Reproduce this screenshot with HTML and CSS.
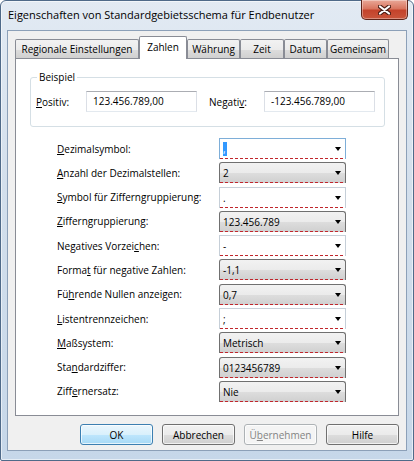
FILE: index.html
```html
<!DOCTYPE html>
<html lang="de">
<head>
  <meta charset="UTF-8" />
  <title>Eigenschaften von Standardgebietsschema für Endbenutzer</title>
  <link rel="stylesheet" href="styles.css">
</head>
<body>
  <div class="window">
    <div class="titlebar">
      <span class="title">Eigenschaften von Standardgebietsschema für Endbenutzer</span>
      <div class="close">
        <svg width="13" height="10" viewBox="0 0 13 10">
          <path d="M2 1.5 L11 8.5 M11 1.5 L2 8.5" stroke="#4a1d14" stroke-width="4.2" stroke-linecap="round" />
          <path d="M2 1.5 L11 8.5 M11 1.5 L2 8.5" stroke="#ffffff" stroke-width="2.2" stroke-linecap="round" />
        </svg>
      </div>
    </div>

    <div class="client">
      <!-- Registerkarten -->
      <div class="tabstrip">
        <div class="tab w-region">Regionale Einstellungen</div>
        <div class="tab active w-zahlen">Zahlen</div>
        <div class="tab w-waehrung">Währung</div>
        <div class="tab w-zeit">Zeit</div>
        <div class="tab w-datum">Datum</div>
        <div class="tab w-gemeinsam">Gemeinsam</div>
      </div>

      <div class="panel">
        <fieldset class="sample">
          <legend>Beispiel</legend>
          <div class="sample-row">
            <span class="sample-label"><u>P</u>ositiv:</span>
            <div class="textbox">123.456.789,00</div>
            <span class="sample-label neg">Negati<u>v</u>:</span>
            <div class="textbox">-123.456.789,00</div>
          </div>
        </fieldset>

        <div class="settings">
          <div class="row">
            <span class="row-label"><u>D</u>ezimalsymbol:</span>
            <div class="combo edit focus"><span class="sel">,</span></div>
          </div>
          <div class="row">
            <span class="row-label"><u>A</u>nzahl der Dezimalstellen:</span>
            <div class="combo list">2</div>
          </div>
          <div class="row">
            <span class="row-label"><u>S</u>ymbol für Zifferngruppierung:</span>
            <div class="combo edit">.</div>
          </div>
          <div class="row">
            <span class="row-label"><u>Z</u>ifferngruppierung:</span>
            <div class="combo list">123.456.789</div>
          </div>
          <div class="row">
            <span class="row-label">Negatives Vorzei<u>c</u>hen:</span>
            <div class="combo edit">-</div>
          </div>
          <div class="row">
            <span class="row-label">Forma<u>t</u> für negative Zahlen:</span>
            <div class="combo list">-1,1</div>
          </div>
          <div class="row">
            <span class="row-label">Fü<u>h</u>rende Nullen anzeigen:</span>
            <div class="combo list">0,7</div>
          </div>
          <div class="row">
            <span class="row-label"><u>L</u>istentrennzeichen:</span>
            <div class="combo edit">;</div>
          </div>
          <div class="row">
            <span class="row-label"><u>M</u>aßsystem:</span>
            <div class="combo list">Metrisch</div>
          </div>
          <div class="row">
            <span class="row-label">Sta<u>n</u>dardziffer:</span>
            <div class="combo list">0123456789</div>
          </div>
          <div class="row">
            <span class="row-label">Ziff<u>e</u>rnersatz:</span>
            <div class="combo list">Nie</div>
          </div>
        </div>
      </div>

      <div class="buttons">
        <button class="btn default">OK</button>
        <button class="btn">Abbrechen</button>
        <button class="btn" disabled>Ü<u>b</u>ernehmen</button>
        <button class="btn">Hilfe</button>
      </div>
    </div>
  </div>
</body>
</html>
```

FILE: styles.css
```css
* {
  box-sizing: border-box;
}
body {
  margin: 0;
  font-family: 'Open Sans', 'Liberation Sans', sans-serif;
  font-size: 10px;
  color: #000;
  background: #fff;
}
.window {
  width: 414px;
  height: 461px;
  display: flex;
  flex-direction: column;
  border: 1px solid #4f6a89;
  border-radius: 6px 6px 2px 2px;
  background: linear-gradient(180deg, #e2eaf3 0%, #d3dfec 40%, #c6d7e9 100%);
  box-shadow: inset 0 0 0 1px rgba(255, 255, 255, 0.55);
}
.titlebar {
  height: 29px;
  display: flex;
  align-items: flex-start;
}
.title {
  font-size: 11px;
  padding-left: 7px;
  margin-top: 6px;
  line-height: 16px;
  white-space: nowrap;
}
.close {
  margin-left: auto;
  margin-right: 5px;
  margin-top: -1px;
  width: 47px;
  height: 20px;
  display: flex;
  align-items: center;
  justify-content: center;
  border: 1px solid #5e2419;
  border-top: none;
  border-radius: 0 0 5px 5px;
  background: linear-gradient(180deg, #e9a898 0%, #d97660 45%, #c4432b 55%, #c9553b 100%);
  box-shadow: inset 0 0 0 1px rgba(255, 255, 255, 0.35);
}
.client {
  flex: 1;
  margin: 0 6px 9px 6px;
  border: 1px solid #8ca0b8;
  background: #f0f0f0;
  display: flex;
  flex-direction: column;
  padding: 5px 0 5px 0;
}

/* Registerkarten */
.tabstrip {
  height: 23px;
  display: flex;
  align-items: flex-end;
  padding-left: 7px;
  margin-bottom: -1px;
}
.tab {
  height: 20px;
  line-height: 18px;
  text-align: center;
  white-space: nowrap;
  border: 1px solid #898c95;
  border-bottom: none;
  border-radius: 2px 2px 0 0;
  background: linear-gradient(180deg, #f2f2f2 0%, #ebebeb 50%, #dddddd 51%, #cfcfcf 100%);
}
.tab.active {
  height: 23px;
  line-height: 20px;
  background: #fff;
  position: relative;
  z-index: 1;
}
.w-region { width: 124px; }
.w-zahlen { width: 48px; }
.w-waehrung { width: 53px; }
.w-zeit { width: 44px; }
.w-datum { width: 43px; }
.w-gemeinsam { width: 62px; }

.panel {
  height: 358px;
  margin: 0 7px;
  background: #fff;
  border: 1px solid #898c95;
}

/* Beispiel */
.sample {
  margin: 12px 13px 0 14px;
  padding: 0 0 14px 5px;
  border: 1px solid #d5dfe5;
  border-radius: 3px;
}
.sample legend {
  padding: 0 2px;
  margin-left: 1px;
  line-height: 13px;
}
.sample-row {
  display: flex;
  align-items: center;
  margin-top: 7px;
}
.sample-label {
  width: 50px;
}
.sample-label.neg {
  width: 55px;
  margin-left: 12px;
}
.textbox {
  width: 111px;
  height: 21px;
  line-height: 19px;
  padding-left: 6px;
  border: 1px solid #dbdfe6;
  border-top-color: #abadb3;
  border-bottom-color: #e3e9ef;
  background: #fff;
  white-space: nowrap;
}

/* Einstellungen */
.settings {
  display: flex;
  flex-direction: column;
  gap: 3.3px;
  margin-top: 11px;
  padding-left: 41px;
}
.row {
  display: flex;
  align-items: center;
  height: 21px;
}
.row-label {
  width: 162px;
  white-space: nowrap;
}
.combo {
  width: 127px;
  height: 21px;
  display: flex;
  align-items: center;
  padding: 0 4px 0 3px;
  border: 1px solid #c6cfd8;
  border-bottom: none;
  white-space: nowrap;
  background: repeating-linear-gradient(90deg, #c0262c 0 3px, transparent 3px 5px) left bottom / 100% 1px no-repeat, #fff;
}
.combo::after {
  content: "";
  margin-left: auto;
  border-left: 3.5px solid transparent;
  border-right: 3.5px solid transparent;
  border-top: 4px solid #000;
}
.combo.focus {
  border-color: #7eaed8;
}
.combo.list {
  border-color: #707070;
  border-radius: 3px 3px 0 0;
  background: repeating-linear-gradient(90deg, #c0262c 0 3px, transparent 3px 5px) left bottom / 100% 1px no-repeat,
    linear-gradient(180deg, #f2f2f2 0%, #ebebeb 50%, #dddddd 51%, #cfcfcf 100%);
}
.sel {
  background: #3399ff;
  color: #fff;
  width: 4px;
  line-height: 14px;
}

/* Schaltflächen */
.buttons {
  display: flex;
  justify-content: flex-end;
  gap: 9px;
  margin-top: 8px;
  padding-right: 7px;
}
.btn {
  width: 73px;
  height: 21px;
  padding: 0;
  font-family: inherit;
  font-size: 10px;
  color: #000;
  border: 1px solid #707070;
  border-radius: 3px;
  background: linear-gradient(180deg, #f2f2f2 0%, #ebebeb 50%, #dddddd 51%, #cfcfcf 100%);
  box-shadow: inset 0 0 0 1px rgba(255, 255, 255, 0.7);
}
.btn.default {
  border-color: #3c7fb1;
  background: linear-gradient(180deg, #eaf6fd 0%, #d9f0fc 50%, #bee6fd 51%, #a7d9f5 100%);
}
.btn:disabled {
  color: #838383;
  border-color: #adb2b5;
  background: #f4f4f4;
}
```
